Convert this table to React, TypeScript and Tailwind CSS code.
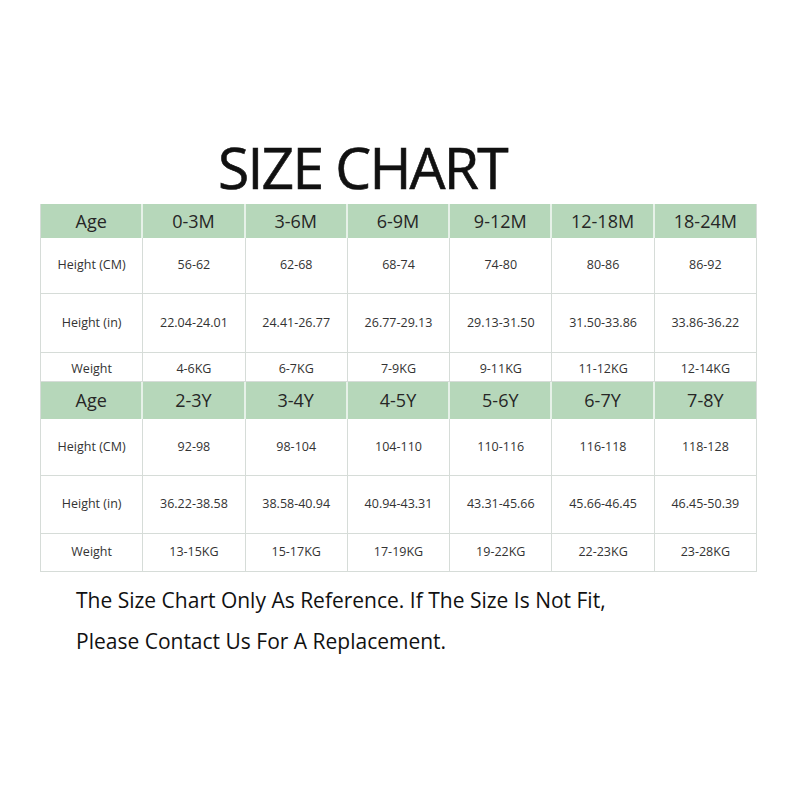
import React from "react";

const font = { fontFamily: '"Open Sans", "Noto Sans", sans-serif' };

type Section = { head: string[]; rows: { label: string; vals: string[]; h: string; text: string }[]; headH: string };

const sections: Section[] = [
  {
    headH: "h-[34px]",
    head: ["Age", "0-3M", "3-6M", "6-9M", "9-12M", "12-18M", "18-24M"],
    rows: [
      { label: "Height (CM)", vals: ["56-62", "62-68", "68-74", "74-80", "80-86", "86-92"], h: "h-[56px]", text: "" },
      { label: "Height (in)", vals: ["22.04-24.01", "24.41-26.77", "26.77-29.13", "29.13-31.50", "31.50-33.86", "33.86-36.22"], h: "h-[59px]", text: "" },
      { label: "Weight", vals: ["4-6KG", "6-7KG", "7-9KG", "9-11KG", "11-12KG", "12-14KG"], h: "h-[29px]", text: "pt-[5px]" },
    ],
  },
  {
    headH: "h-[37px]",
    head: ["Age", "2-3Y", "3-4Y", "4-5Y", "5-6Y", "6-7Y", "7-8Y"],
    rows: [
      { label: "Height (CM)", vals: ["92-98", "98-104", "104-110", "110-116", "116-118", "118-128"], h: "h-[57px]", text: "" },
      { label: "Height (in)", vals: ["36.22-38.58", "38.58-40.94", "40.94-43.31", "43.31-45.66", "45.66-46.45", "46.45-50.39"], h: "h-[58px]", text: "" },
      { label: "Weight", vals: ["13-15KG", "15-17KG", "17-19KG", "19-22KG", "22-23KG", "23-28KG"], h: "h-[38px]", text: "" },
    ],
  },
];

export default function App() {
  return (
    <div className="w-[800px] h-[800px] bg-white overflow-hidden" style={font}>
      <div className="pt-[137px] pl-[218px]">
        <div className="text-[57px] leading-[60px] tracking-[-1.8px] text-[#111] [-webkit-text-stroke:0.6px_#111]">SIZE CHART</div>
      </div>
      <div className="ml-[40px] mt-[7px] w-[717px] border-l border-[#d6dcd8]">
        {sections.map((s, si) => (
          <div key={si}>
            <div className={`grid grid-cols-7 bg-[#b6d7ba] ${s.headH}`}>
              {s.head.map((t, i) => (
                <div
                  key={i}
                  className={`flex items-center justify-center text-[18px] text-[#262626] ${i < 6 ? "border-r-2 border-[#e6f1e8]" : "border-r border-[#d6dcd8]"}`}
                >
                  {t}
                </div>
              ))}
            </div>
            {s.rows.map((r, ri) => (
              <div key={ri} className={`grid grid-cols-7 ${r.h} border-b border-[#d6dcd8]`}>
                {[r.label, ...r.vals].map((t, i) => (
                  <div
                    key={i}
                    className={`flex items-center justify-center text-[12.5px] text-[#333] border-r border-[#d6dcd8] ${r.text}`}
                  >
                    {t}
                  </div>
                ))}
              </div>
            ))}
          </div>
        ))}
      </div>
      <div className="ml-[76px] mt-[8px] text-[21px] leading-[41px] text-[#111]">
        <div>The Size Chart Only As Reference. If The Size Is Not Fit,</div>
        <div>Please Contact Us For A Replacement.</div>
      </div>
    </div>
  );
}
